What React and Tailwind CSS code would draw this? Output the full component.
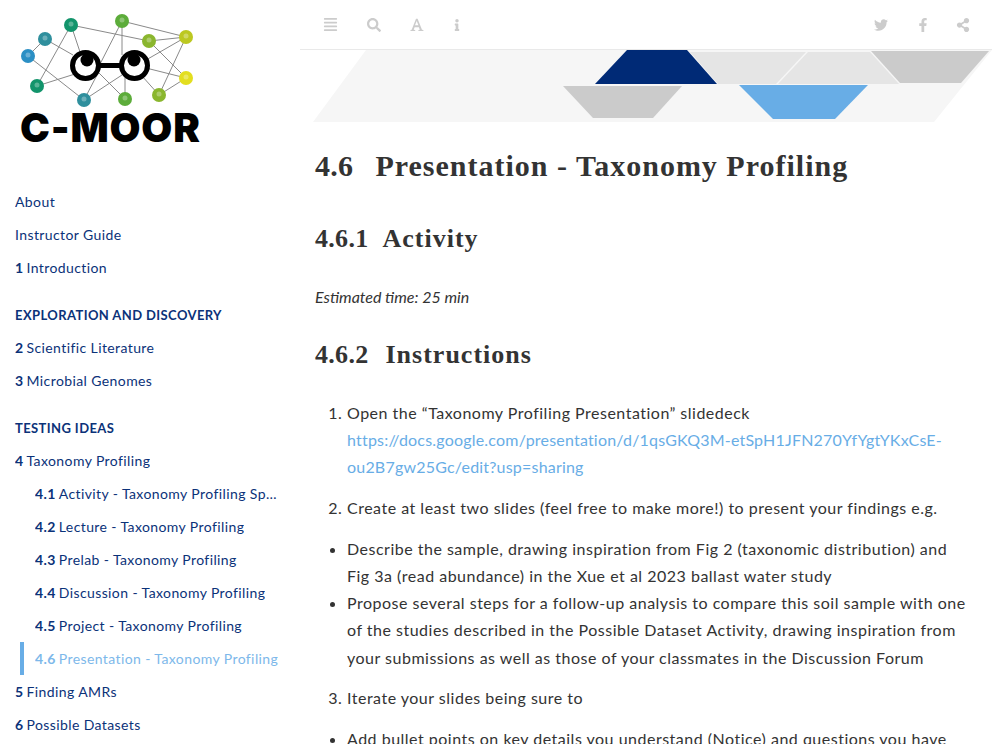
import { FaAlignJustify, FaSearch, FaInfo, FaTwitter, FaFacebookF, FaShareAlt } from "react-icons/fa";

// Sidebar rows, top to bottom
const navGroups = [
  {
    items: [
      { title: "About" },
      { title: "Instructor Guide" },
      { num: "1", title: "Introduction" },
    ],
  },
  {
    heading: "EXPLORATION AND DISCOVERY",
    items: [
      { num: "2", title: "Scientific Literature" },
      { num: "3", title: "Microbial Genomes" },
    ],
  },
  {
    heading: "TESTING IDEAS",
    items: [
      { num: "4", title: "Taxonomy Profiling" },
      { num: "4.1", title: "Activity - Taxonomy Profiling Spreadsheet", sub: true },
      { num: "4.2", title: "Lecture - Taxonomy Profiling", sub: true },
      { num: "4.3", title: "Prelab - Taxonomy Profiling", sub: true },
      { num: "4.4", title: "Discussion - Taxonomy Profiling", sub: true },
      { num: "4.5", title: "Project - Taxonomy Profiling", sub: true },
      { num: "4.6", title: "Presentation - Taxonomy Profiling", sub: true, active: true },
      { num: "5", title: "Finding AMRs" },
      { num: "6", title: "Possible Datasets" },
    ],
  },
];

const nodes = [
  { x: 28, y: 56, c: "#2b8fc4" },
  { x: 45, y: 39, c: "#2f8f9d" },
  { x: 71, y: 25, c: "#12946b" },
  { x: 37, y: 86, c: "#12946b" },
  { x: 84, y: 100, c: "#2f8f9d" },
  { x: 125, y: 99, c: "#5cac3a" },
  { x: 122, y: 21, c: "#5cac3a" },
  { x: 149, y: 41, c: "#8ab62e" },
  { x: 186, y: 37, c: "#bcc821" },
  { x: 186, y: 78, c: "#e3de1f" },
  { x: 159, y: 95, c: "#8ab62e" },
];

const links = [
  [28, 56, 45, 39], [28, 56, 84, 100], [71, 25, 37, 86], [71, 25, 149, 41], [71, 25, 80, 52],
  [45, 39, 73, 55], [37, 86, 75, 74], [84, 100, 97, 75], [84, 100, 122, 75], [125, 99, 125, 75],
  [125, 99, 98, 72], [122, 21, 97, 70], [122, 21, 122, 55], [122, 21, 186, 37], [149, 41, 186, 37],
  [149, 41, 186, 78], [146, 60, 186, 37], [186, 37, 159, 95], [186, 78, 159, 95], [146, 68, 186, 78],
  [142, 76, 159, 95],
];

function Logo() {
  return (
    <div className="h-[169px] pl-5 pt-3">
      <svg width="190" height="96" viewBox="20 12 190 96" className="block">
        {links.map(([x1, y1, x2, y2], i) => (
          <line key={i} x1={x1} y1={y1} x2={x2} y2={y2} stroke="#8a8a8a" strokeWidth="1" />
        ))}
        {nodes.map((n) => (
          <g key={`${n.x}-${n.y}`}>
            <circle cx={n.x} cy={n.y} r="7" fill={n.c} />
            <circle cx={n.x} cy={n.y - 1} r="2.5" fill="#ffffff" opacity="0.3" />
          </g>
        ))}
        {/* goggles */}
        <rect x="96" y="63" width="28" height="5" fill="#000000" />
        <circle cx="85.5" cy="65.5" r="13" fill="#ffffff" stroke="#000000" strokeWidth="5" />
        <circle cx="134.5" cy="65.5" r="13" fill="#ffffff" stroke="#000000" strokeWidth="5" />
        <circle cx="87" cy="60" r="6.5" fill="#000000" />
        <circle cx="134" cy="60" r="6.5" fill="#000000" />
      </svg>
      <div className="-mt-[3px] font-['Inter','Liberation_Sans',sans-serif] text-[40px] leading-[46px] font-black tracking-[0.8px] text-black">
        C-MOOR
      </div>
    </div>
  );
}

function Sidebar() {
  return (
    <aside className="w-[300px] shrink-0 overflow-hidden font-['Lato','Liberation_Sans',sans-serif] text-[14px] tracking-[0.4px] text-[#0b3279]">
      <Logo />
      <nav className="pt-4 pb-4">
        {navGroups.map((group, i) => (
          <ul key={i} className={i > 0 ? "mt-[14px]" : ""}>
            {group.heading && (
              <li className="flex h-[33px] items-center pt-[2px] pl-[15px] text-[13px] font-bold tracking-[0.4px]">
                {group.heading}
              </li>
            )}
            {group.items.map((item) => (
              <li
                key={item.title}
                className={`flex h-[33px] items-center pr-[19px] ${
                  item.active
                    ? "ml-5 border-l-4 border-[#68ade6] pl-[11px] text-[#7db8ea]"
                    : item.sub
                      ? "pl-[35px]"
                      : "pl-[15px]"
                }`}
              >
                <span className="truncate">
                  {item.num && <b className="mr-[3px]">{item.num}</b>}
                  {item.title}
                </span>
              </li>
            ))}
          </ul>
        ))}
      </nav>
    </aside>
  );
}

function Toolbar() {
  return (
    <div className="flex h-[50px] items-center justify-between border-b border-[#e9e9e9] pr-[22px] pl-[22px] text-[14px] text-[#cccccc]">
      <div className="flex items-center">
        <FaAlignJustify className="ml-[1px] text-[15px]" />
        <FaSearch className="ml-[29px] text-[14px]" />
        {/* serif A, the font-settings button */}
        <svg width="14" height="14" viewBox="0 0 14 14" className="ml-[29px]" fill="currentColor">
          <path d="M0.5 13v-0.9l1.2-0.3L6 0.8h1.6l4.4 11 1.4 0.3V13H8.4v-0.9l1.4-0.3-0.9-2.5H4.6l-0.9 2.5 1.5 0.3V13H0.5zM5 7.3h3.4L6.7 2.9 5 7.3z" />
        </svg>
        <FaInfo className="ml-[27px] text-[12px]" />
      </div>
      <div className="flex items-center">
        <FaTwitter />
        <FaFacebookF className="ml-[28px]" />
        <FaShareAlt className="ml-[26px]" />
      </div>
    </div>
  );
}

function Banner() {
  return (
    <svg width="692" height="73" viewBox="0 0 692 73" className="block">
      <polygon points="13,72 66,0 692,0 634,72" fill="#f6f6f6" />
      <polygon points="295,34 327,0 387,0 417,34" fill="#002a76" />
      <polygon points="390,2 506,2 476,34 418,34" fill="#e5e5e5" />
      <polygon points="508,2 570,2 599,34 478,34" fill="#e5e5e5" />
      <polygon points="571,1 689,1 661,33 600,33" fill="#cbcbcb" />
      <polygon points="263,36 382,36 353,68 293,68" fill="#cbcbcb" />
      <polygon points="439,35 568,35 535,69 473,69" fill="#68ade6" />
    </svg>
  );
}

function Content() {
  return (
    <main className="min-w-0 flex-1 font-['Lato','Liberation_Sans',sans-serif] text-[16px] leading-[27.2px] tracking-[0.5px] text-[#333333]">
      <Toolbar />
      <Banner />
      <div className="pr-[20px] pl-[15px]">
        <h1 className="mt-[23px] font-['Liberation_Serif',serif] text-[30px] leading-[40px] font-bold tracking-[0.3px]">
          <span className="mr-[22px]">4.6</span>
          <span className="tracking-[1px]">Presentation - Taxonomy Profiling</span>
        </h1>
        <h2 className="mt-[36px] font-['Liberation_Serif',serif] text-[26px] leading-[34px] font-bold tracking-[0.3px]">
          <span className="mr-[14px]">4.6.1</span>
          <span className="tracking-[1px]">Activity</span>
        </h2>
        <p className="mt-[27px] tracking-normal italic">Estimated time: 25 min</p>
        <h2 className="mt-[28px] font-['Liberation_Serif',serif] text-[26px] leading-[34px] font-bold tracking-[0.3px]">
          <span className="mr-[17px]">4.6.2</span>
          <span className="tracking-[1px]">Instructions</span>
        </h2>
        <ol className="mt-[26.5px] list-decimal pl-8">
          <li>
            Open the “Taxonomy Profiling Presentation” slidedeck{" "}
            <a className="tracking-[0.2px] text-[#68ade6]">
              https://docs.google.com/presentation/d/1qsGKQ3M-etSpH1JFN270YfYgtYKxCsE-ou2B7gw25Gc/edit?usp=sharing
            </a>
          </li>
          <li className="mt-[13.6px]">
            Create at least two slides (feel free to make more!) to present your findings e.g.
          </li>
        </ol>
        <ul className="mt-[13.6px] list-disc pl-8">
          <li>
            Describe the sample, drawing inspiration from Fig 2 (taxonomic distribution) and Fig 3a (read abundance) in
            the Xue et al 2023 ballast water study
          </li>
          <li>
            Propose several steps for a follow-up analysis to compare this soil sample with one of the studies described
            in the Possible Dataset Activity, drawing inspiration from your submissions as well as those of your
            classmates in the Discussion Forum
          </li>
        </ul>
        <ol start={3} className="mt-[13.6px] list-decimal pl-8">
          <li>Iterate your slides being sure to</li>
        </ol>
        <ul className="mt-[13.6px] list-disc pl-8">
          <li>Add bullet points on key details you understand (Notice) and questions you have</li>
        </ul>
      </div>
    </main>
  );
}

export default function App() {
  return (
    <div className="flex h-[744px] overflow-hidden bg-white">
      <Sidebar />
      <Content />
    </div>
  );
}
